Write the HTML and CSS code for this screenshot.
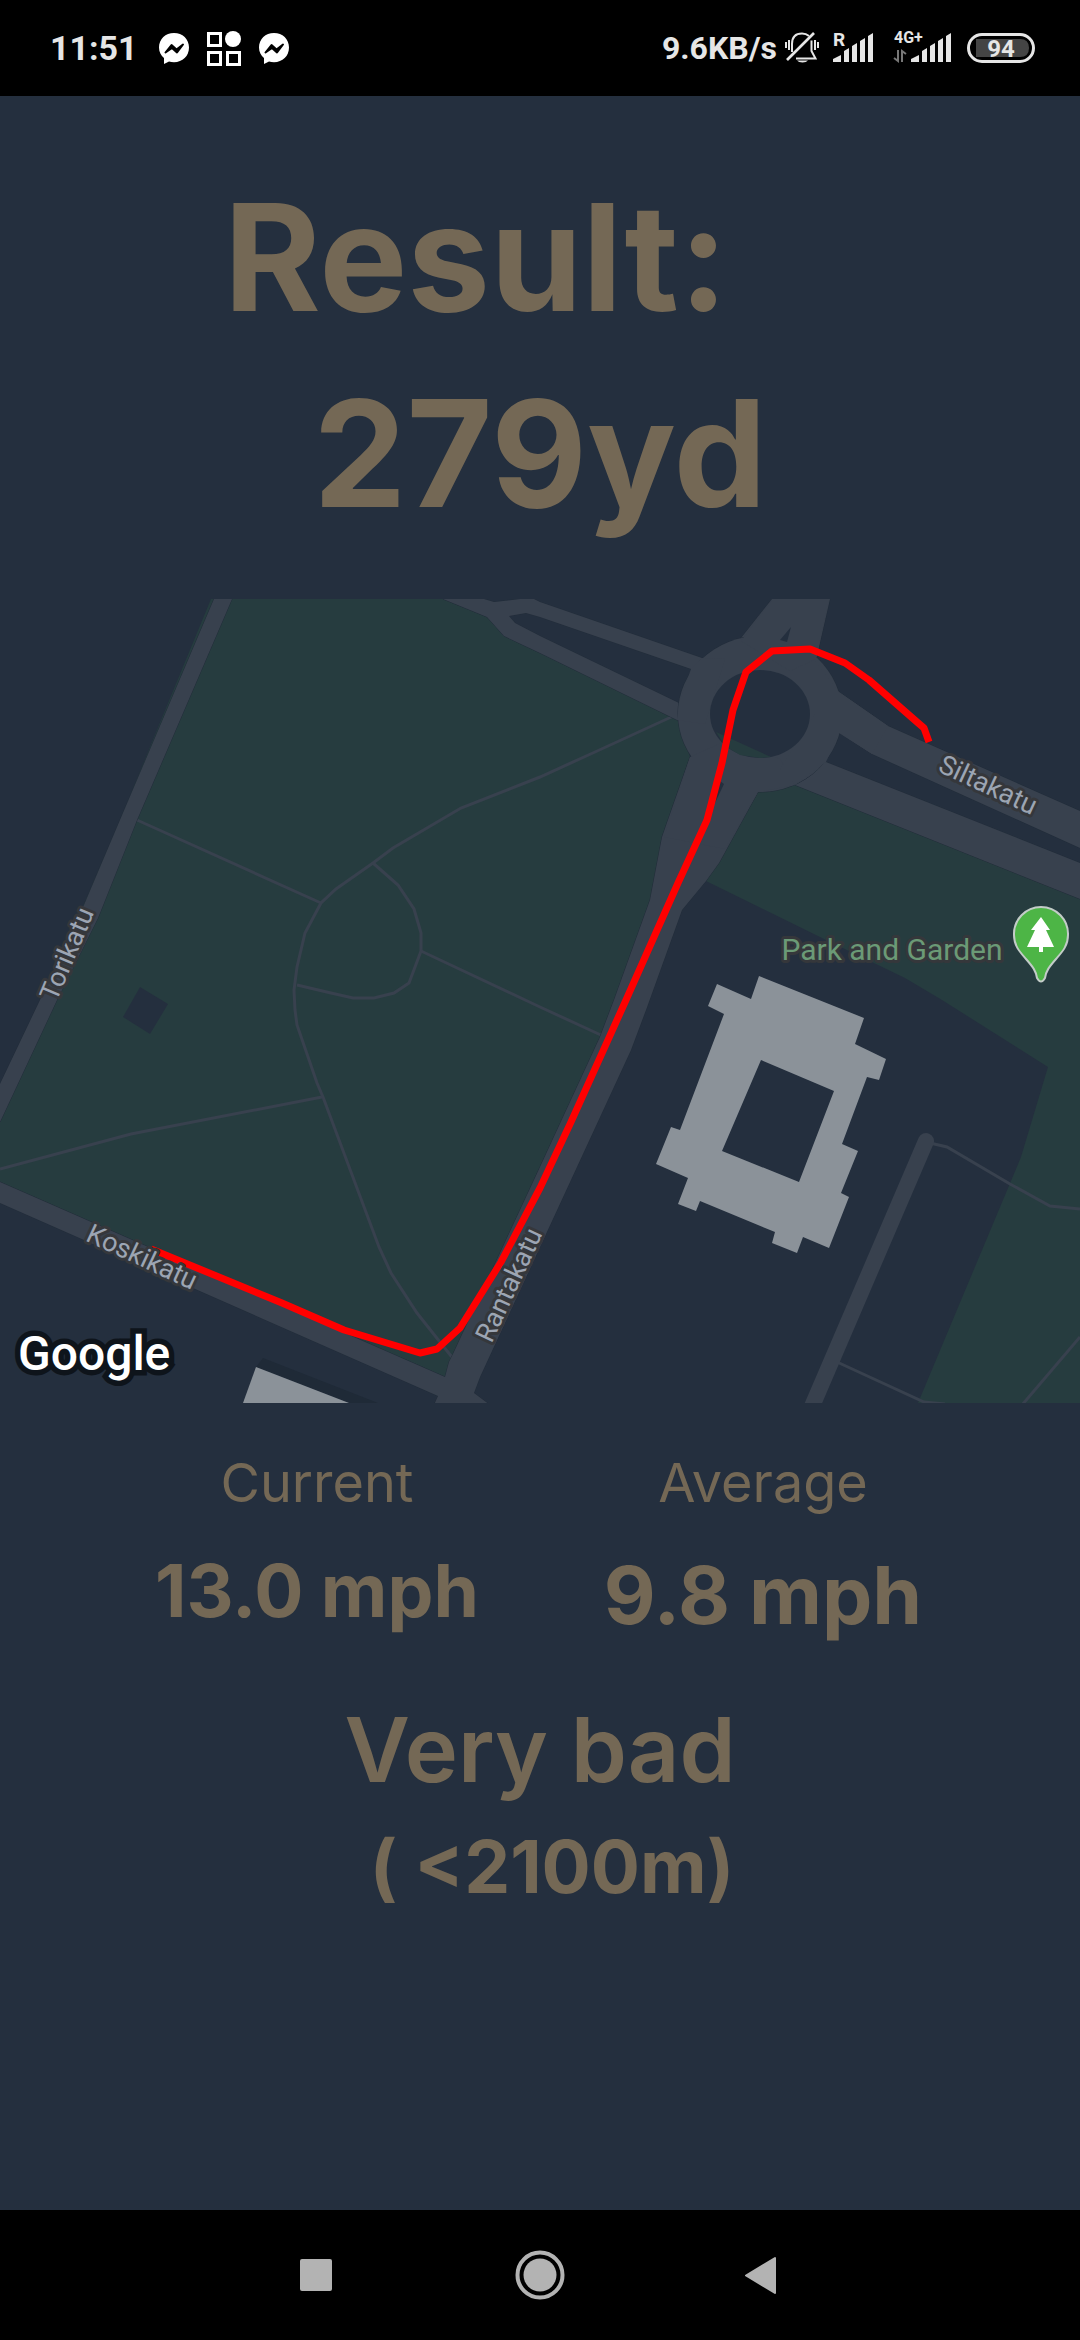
FILE: index.html
```html
<!DOCTYPE html>
<html lang="en">
<head>
<meta charset="utf-8">
<meta name="viewport" content="width=device-width, initial-scale=1">
<title>Result</title>
<link rel="stylesheet" href="styles.css">
</head>
<body>
<header class="status">
  <div class="status-left">
    <span class="clock">11:51</span>
    <svg class="icon-chat" viewBox="0 0 32 32" aria-hidden="true"><path fill="#fff" d="M16 1C7.500 1 1 7 1 15.500c0 4.500 2 8 5 10.500v6l5-2.400c1.600.4 3.200.6 5 .6 8.500 0 15-6.200 15-14.700S24.500 1 16 1z"/><path d="M7.500 20.500L13.500 13l5 4.500 6.500-5-6 8-5-4.500z" fill="#000" stroke="#000" stroke-width="2" stroke-linejoin="round"/></svg>
    <svg class="icon-apps" viewBox="0 0 36 36" aria-hidden="true"><g fill="none" stroke="#fff" stroke-width="3"><path d="M2.500 3.500h12v12h-12zM2.500 22.500h12v12h-12zM21.500 22.500h12v12h-12z"/></g><circle cx="27" cy="9" r="8" fill="#fff"/></svg>
    <svg class="icon-chat" viewBox="0 0 32 32" aria-hidden="true"><path fill="#fff" d="M16 1C7.500 1 1 7 1 15.500c0 4.500 2 8 5 10.500v6l5-2.400c1.600.4 3.200.6 5 .6 8.500 0 15-6.200 15-14.700S24.500 1 16 1z"/><path d="M7.500 20.500L13.500 13l5 4.500 6.500-5-6 8-5-4.500z" fill="#000" stroke="#000" stroke-width="2" stroke-linejoin="round"/></svg>
  </div>
  <div class="status-right">
    <div class="speed"><span>9.6KB/s</span>
      <svg class="icon-bell" viewBox="0 0 34 34" aria-hidden="true"><g fill="none" stroke="#e6e6e6" stroke-width="2"><path d="M7 21V13C7 6 11 2.500 17 2.500c3 0 5 .8 7 2.500M26.500 9.500V20l4 7.500H11M1 11v6M4 9v10M30 9v10M33 11v6"/><path d="M29 2L2 29" stroke-width="2.600"/></g><path d="M12 29.500h11a6 3.500 0 0 1-11 0z" fill="#e6e6e6"/></svg>
    </div>
    <svg class="icon-roaming" viewBox="0 -8 46 50" aria-hidden="true"><text x="0" y="15" class="signal-tag signal-tag-wide">R</text><path class="bars" d="M0 31v-3l8-4v7zM11 31V20l5-3v14zM19 31V15l5-3v19zM27 31V10l5-3v24zM35 31V5l5-3v29z"/></svg>
    <svg class="icon-mobile" viewBox="0 -8 60 50" aria-hidden="true"><text x="1" y="12" class="signal-tag">4G+</text><g fill="none" stroke="#777" stroke-width="2"><path d="M1 27l4 3V19M13 23l-4-3v11"/></g><path class="bars" d="M18 31v-3l8-4v7zM29 31V20l5-3v14zM37 31V15l5-3v19zM45 31V10l5-3v24zM53 31V5l5-3v29z"/></svg>
    <svg class="icon-battery" viewBox="0 0 68 30" aria-label="Battery 94"><rect x="1.500" y="1.500" width="65" height="27" rx="13.500" fill="none" stroke="#e6e6e6" stroke-width="3"/><path d="M9 6h44q9 0 9 9t-9 9H9z" fill="#444"/><text x="34" y="24" class="battery-level">94</text></svg>
  </div>
</header>

<main class="screen">
  <h1 class="result">
    <span class="result-label">Result:</span>
    <span>279yd</span>
  </h1>

  <svg class="map" viewBox="0 0 1080 804" role="img" aria-label="Route map">
    <rect width="1080" height="804" fill="#242f3e"/>
    <g fill="#263c3f">
      <path d="M211 0L164 114 120 221 0 500V583L445 778 453 757 540 568 600 438 614 401 650 301 662 238 690 158 678 121 540 54 504 37 487 18 443 0z"/>
      <path d="M706 282L758 193 795 186 1080 300V804H918L1021 558 1048 468 942 401 905 379 822 339z"/>
    </g>
    <path fill="#242f3e" d="M140 388L168 405 150 435 123 418z"/>
    <g fill="none" stroke="#38414e" stroke-width="3">
      <path d="M137 221L321 304"/>
      <path d="M680 114L595 153 540 178 461 209 393 249 373 264 336 290 321 304 305 334 297 368 294 391 295 411 297 426 317 484 323 498 379 648 391 674 417 714 455 762"/>
      <path d="M373 264L398 286 414 310 421 334 421 352 409 384 394 394 374 399 353 399 331 394 297 386"/>
      <path d="M421 352L540 408 603 437M0 570L131 535 322 498"/>
      <path d="M930 544L947 548 1010 585 1050 607 1080 610M837 763L924 803 945 805M1080 738L1022 806"/>
      <path d="M926 542L810 812" stroke-width="16" stroke-linecap="round"/>
    </g>
    <g fill="#38414e" stroke="#222d3a" stroke-width="1" paint-order="stroke">
      <path d="M214 0H232L137 221 98 319 57 401 0 523V485L40 401 84 306 120 221z"/>
      <path d="M0 583L445 778 449 763 453 755 540 568 600 438 614 401 650 301 662 238 690 158 740 175 758 193 719 264 706 282 682 311 646 411 631 451 540 648 480 778 474 794 490 806H434L438 797 0 604z"/>
      <path d="M443 0H484L494 3 520 0H534L540 3 702 59 730 90 691 70 540 18 526 14 509 17 515 24 540 37 679 104 700 130 677 121 540 54 504 37 487 18z"/>
      <path d="M772 0H830L816 61 780 60 741 39z"/>
      <path d="M839 93L888 127 1080 212V249L872 155 840 134 820 115z"/>
      <path d="M826 163L1080 264V300L795 186 790 170z"/>
      <ellipse cx="760" cy="115" rx="82" ry="78"/>
    </g>
    <g fill="#38414e">
      <path d="M690 158L730 140 780 160 795 186 758 193 725 250 664 238z"/>
      <path d="M772 1H829L816 60 790 72 741 42z"/>
      <path d="M815 62L839 93 888 127 872 155 839 134 826 163 795 186 780 170 815 115z"/>
      <path d="M702 59L691 70 679 104 677 121 705 125 725 60z"/>
    </g>
    <ellipse cx="760" cy="115" rx="50" ry="44" fill="#242f3e"/>
    <path fill="#263c3f" d="M716 133L771 158 760 159 740 156 725 147z"/>
    <path fill="#242f3e" d="M791 28L780 41 787 43zM720 182L724 185 714 206z"/>
    <g fill="#8b9299">
      <path fill-rule="evenodd" d="M717 385L751 400 759 377 864 419 855 445 886 460 879 481 867 478 842 545 858 552 841 594 849 598 829 649 803 638 797 654 772 644 775 633 700 602 696 612 678 605 688 579 656 565 671 528 680 531 724 415 708 407zM761 461L722 552 799 583 834 492z"/>
      <path fill="#1f2a37" d="M263 759L378 804H349L256 768z"/>
      <path d="M256 768L349 804H243z"/>
    </g>
    <path class="route" d="M151 650L282 704 344 731 420 754 437 750 460 729 501 663 540 589 571 523 626 401 678 284 707 221 722 164 733 111 746 73 772 52 810 50 845 64 869 81 917 123 924 129 929 143"/>
    <g class="street">
      <text transform="translate(67 355) rotate(-67)" dy="9">Torikatu</text>
      <text transform="translate(142 658) rotate(25)" dy="9">Koskikatu</text>
      <text transform="translate(509 686) rotate(-65)" dy="9">Rantakatu</text>
      <text transform="translate(988 186) rotate(25)" dy="9">Siltakatu</text>
      <text class="park-name" x="892" y="361">Park and Garden</text>
    </g>
    <g>
      <path d="M1041 308a27 27 0 0 1 27 28c0 11-6 17-12 24-7 8-10 12-11 19q-4 7-8 0c-1-7-4-11-11-19-6-7-12-13-12-24a27 27 0 0 1 27-28z" fill="#4db546" stroke="#c3ccc8" stroke-width="2"/>
      <path d="M1041 318l9 13h-4l8 17h-11v5h-4v-5h-12l8-17h-4z" fill="#fff"/>
    </g>
    <text class="brand" x="18" y="771">Google</text>
  </svg>

  <dl class="stats">
    <div class="stat">
      <dt>Current</dt>
      <dd>13.0 mph</dd>
    </div>
    <div class="stat">
      <dt>Average</dt>
      <dd class="average">9.8 mph</dd>
    </div>
  </dl>

  <p class="rating">Very bad</p>
  <p class="range">( &lt;2100m)</p>
</main>

<nav class="system-nav" aria-label="System">
  <button type="button" aria-label="Recent apps"><svg viewBox="0 0 96 96"><rect x="32" y="32" width="32" height="32" rx="2"/></svg></button>
  <button type="button" aria-label="Home"><svg viewBox="0 0 96 96"><circle cx="48" cy="48" r="16.500"/><circle cx="48" cy="48" r="22.500" fill="none" stroke="#b3b3b3" stroke-width="4"/></svg></button>
  <button type="button" aria-label="Back"><svg viewBox="0 0 96 96"><path d="M30 48.500L59 31V66z" stroke="#b3b3b3" stroke-width="2" stroke-linejoin="round"/></svg></button>
</nav>
</body>
</html>
```
FILE: styles.css
```css
* {
  box-sizing: border-box;
}

body {
  margin: 0;
  min-height: 100vh;
  display: flex;
  flex-direction: column;
  background: #242f3e;
  color: #746855;
  font-family: Inter, "Liberation Sans", sans-serif;
}

svg {
  display: block;
}

.status {
  display: flex;
  justify-content: space-between;
  align-items: center;
  height: 96px;
  padding: 0 45px 0 50px;
  background: #000;
  color: #e6e6e6;
  font: 700 34px/40px Roboto, sans-serif;
}

.status-left {
  display: flex;
  align-items: center;
  gap: 16px;
}

.clock {
  margin-right: 4px;
}

.status-right {
  display: flex;
  align-items: center;
  gap: 14px;
}

.speed {
  display: flex;
  align-items: center;
  gap: 8px;
  font-size: 32px;
}

.icon-chat {
  width: 32px;
  height: 32px;
}

.icon-apps {
  width: 36px;
  height: 36px;
}

.icon-bell {
  width: 34px;
  height: 34px;
}

.icon-roaming {
  width: 46px;
  height: 50px;
}

.icon-mobile {
  width: 60px;
  height: 50px;
}

.icon-battery {
  width: 68px;
  height: 30px;
}

.bars {
  fill: #e6e6e6;
}

.signal-tag {
  fill: #e6e6e6;
  font: 700 16px Roboto, sans-serif;
}

.signal-tag-wide {
  font-size: 19px;
}

.battery-level {
  fill: #e6e6e6;
  font: 700 24px Roboto, sans-serif;
  text-anchor: middle;
}

.screen {
  flex: 1;
  display: flex;
  flex-direction: column;
}

.result {
  display: flex;
  flex-direction: column;
  margin: 0;
  padding: 64px 0 47px;
  font-size: 148px;
  font-weight: 700;
  line-height: 196px;
  text-align: center;
}

.result-label {
  padding-right: 128px;
}

.map {
  width: 100%;
  height: auto;
}

.route {
  fill: none;
  stroke: #f00;
  stroke-width: 7;
  stroke-linejoin: round;
}

.street {
  fill: #9ca5b3;
  stroke: #35373b;
  stroke-width: 6;
  stroke-linejoin: round;
  paint-order: stroke;
  font: 400 27px Roboto, sans-serif;
  text-anchor: middle;
}

.park-name {
  fill: #6b9a76;
  font-size: 30px;
}

.brand {
  fill: #fff;
  stroke: #0e141b;
  stroke-width: 11;
  paint-order: stroke;
  font: 500 48px Roboto, sans-serif;
}

.stats {
  display: grid;
  grid-template-columns: 1fr 1fr;
  margin: 0;
  padding: 50px 94px;
  text-align: center;
}

.stat dt {
  margin-bottom: 30px;
  font-size: 54px;
  line-height: 60px;
}

.stat dd {
  margin: 0;
  font-size: 73px;
  font-weight: 700;
  line-height: 96px;
}

.stat .average {
  font-size: 80px;
  line-height: 104px;
}

.rating,
.range {
  margin: 0;
  text-align: center;
}

.rating {
  font-size: 90px;
  font-weight: 600;
  line-height: 106px;
}

.range {
  padding: 16px 0 16px 24px;
  font-size: 73px;
  font-weight: 700;
  line-height: 96px;
}

.system-nav {
  display: flex;
  justify-content: center;
  align-items: center;
  gap: 128px;
  padding: 17px 0;
  background: #000;
}

.system-nav button {
  width: 96px;
  height: 96px;
  padding: 0;
  border: 0;
  background: none;
}

.system-nav svg {
  width: 100%;
  height: 100%;
  fill: #b3b3b3;
}
```
